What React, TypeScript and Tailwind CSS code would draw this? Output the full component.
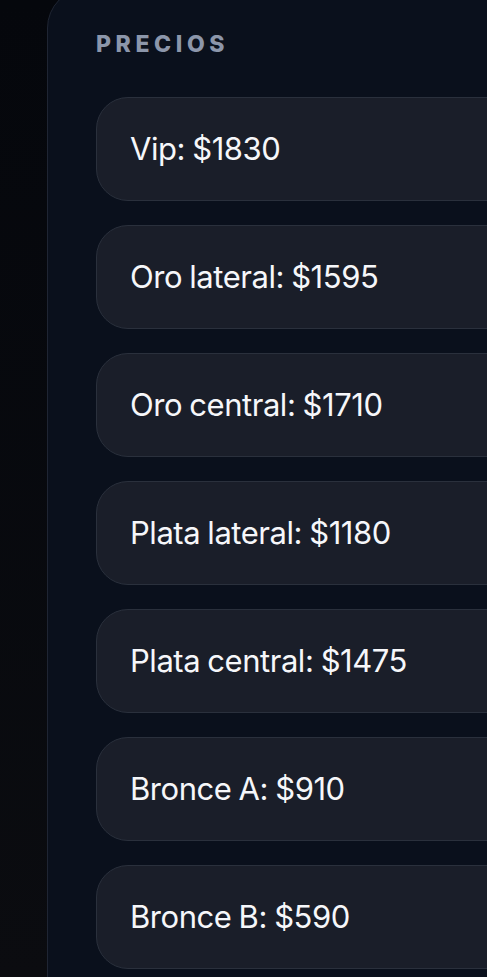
export default function App() {
  const items = [
    "Vip: $1830",
    "Oro lateral: $1595",
    "Oro central: $1710",
    "Plata lateral: $1180",
    "Plata central: $1475",
    "Bronce A: $910",
    "Bronce B: $590",
  ];
  return (
    <div
      className="w-[487px] h-[977px] overflow-hidden bg-gradient-to-b from-[#05070c] to-[#0b0c10] pl-[47px]"
      style={{ fontFamily: "Inter, 'Noto Sans', sans-serif" }}
    >
      <div className="-mt-[12px] w-[600px] h-[1100px] rounded-[40px] border border-[#1f2533] bg-[#0a101c] pl-[48px] pt-[40px]">
        <div className="text-[23px] leading-[30px] font-extrabold tracking-[0.2em] text-[#8c96aa]">PRECIOS</div>
        <div className="mt-[38px] flex flex-col gap-[24px]">
          {items.map((t) => (
            <div
              key={t}
              className="h-[104px] w-[520px] rounded-[32px] border border-[#2a303c] bg-[#1a1e29] flex items-center pl-[33px] text-[31px] tracking-[-0.015em] [word-spacing:-1px] text-[#f6f7fa]"
            >
              {t}
            </div>
          ))}
        </div>
      </div>
    </div>
  );
}
